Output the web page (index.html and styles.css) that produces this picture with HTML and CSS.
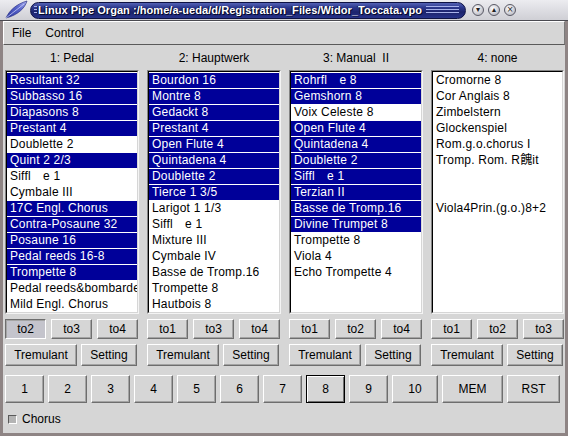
FILE: index.html
```html
<!DOCTYPE html>
<html>
<head>
<meta charset="utf-8">
<title>Linux Pipe Organ</title>
<link rel="stylesheet" href="styles.css">
</head>
<body>
<div class="window">
  <div class="titlebar">
    <svg class="appicon" viewBox="0 0 26 20" width="26" height="20">
      <defs>
        <linearGradient id="fq" x1="0" y1="1" x2="1" y2="0">
          <stop offset="0" stop-color="#2a36a0"/>
          <stop offset="0.6" stop-color="#5a66cc"/>
          <stop offset="1" stop-color="#aab0ee"/>
        </linearGradient>
      </defs>
      <path d="M3 18 C 6 11, 13 4, 24 1 C 22 8, 15 15, 3 18 Z" fill="url(#fq)" stroke="#1c2478" stroke-width="0.6"/>
      <path d="M3 18 L 21 4" stroke="#d8dcff" stroke-width="0.7"/>
    </svg>
    <div class="title">
      <span class="grip grip-l"></span>
      <span class="title-text">Linux Pipe Organ :/home/a-ueda/d/Registration_Files/Widor_Toccata.vpo</span>
      <span class="grip grip-r"></span>
    </div>
    <div class="wbtns">
      <span class="wbtn">&#9662;</span>
      <span class="wbtn">&#9652;</span>
      <span class="wbtn">&#215;</span>
    </div>
  </div>
  <div class="frame">
    <div class="menubar">
      <span class="menu">File</span>
      <span class="menu">Control</span>
    </div>
    <div class="content">
      <div class="divisions">
        <div class="division">
          <div class="div-head">1: Pedal</div>
          <div class="listbox"><ul class="items">
            <li class="on">Resultant 32</li>
            <li class="on">Subbasso 16</li>
            <li class="on">Diapasons 8</li>
            <li class="on">Prestant 4</li>
            <li>Doublette 2</li>
            <li class="on">Quint 2 2/3</li>
            <li>Siffl　e 1</li>
            <li>Cymbale III</li>
            <li class="on">17C Engl. Chorus</li>
            <li class="on">Contra-Posaune 32</li>
            <li class="on">Posaune 16</li>
            <li class="on">Pedal reeds 16-8</li>
            <li class="on">Trompette 8</li>
            <li>Pedal reeds&amp;bombarde</li>
            <li>Mild Engl. Chorus</li>
          </ul></div>
          <div class="couplers">
            <button class="btn pressed">to2</button>
            <button class="btn">to3</button>
            <button class="btn">to4</button>
          </div>
          <div class="extras">
            <button class="btn trem">Tremulant</button>
            <button class="btn sett">Setting</button>
          </div>
        </div>
        <div class="division">
          <div class="div-head">2: Hauptwerk</div>
          <div class="listbox"><ul class="items">
            <li class="on">Bourdon 16</li>
            <li class="on">Montre 8</li>
            <li class="on">Gedackt 8</li>
            <li class="on">Prestant 4</li>
            <li class="on">Open Flute 4</li>
            <li class="on">Quintadena 4</li>
            <li class="on">Doublette 2</li>
            <li class="on">Tierce 1 3/5</li>
            <li>Larigot 1 1/3</li>
            <li>Siffl　e 1</li>
            <li>Mixture III</li>
            <li>Cymbale IV</li>
            <li>Basse de Tromp.16</li>
            <li>Trompette 8</li>
            <li>Hautbois 8</li>
          </ul></div>
          <div class="couplers">
            <button class="btn">to1</button>
            <button class="btn">to3</button>
            <button class="btn">to4</button>
          </div>
          <div class="extras">
            <button class="btn trem">Tremulant</button>
            <button class="btn sett">Setting</button>
          </div>
        </div>
        <div class="division">
          <div class="div-head">3: Manual&nbsp; II</div>
          <div class="listbox"><ul class="items">
            <li class="on">Rohrfl　e 8</li>
            <li class="on">Gemshorn 8</li>
            <li>Voix Celeste 8</li>
            <li class="on">Open Flute 4</li>
            <li class="on">Quintadena 4</li>
            <li class="on">Doublette 2</li>
            <li class="on">Siffl　e 1</li>
            <li class="on">Terzian II</li>
            <li class="on">Basse de Tromp.16</li>
            <li class="on">Divine Trumpet 8</li>
            <li>Trompette 8</li>
            <li>Viola 4</li>
            <li>Echo Trompette 4</li>
          </ul></div>
          <div class="couplers">
            <button class="btn">to1</button>
            <button class="btn">to2</button>
            <button class="btn">to4</button>
          </div>
          <div class="extras">
            <button class="btn trem">Tremulant</button>
            <button class="btn sett">Setting</button>
          </div>
        </div>
        <div class="division">
          <div class="div-head">4: none</div>
          <div class="listbox"><ul class="items">
            <li>Cromorne 8</li>
            <li>Cor Anglais 8</li>
            <li>Zimbelstern</li>
            <li>Glockenspiel</li>
            <li>Rom.g.o.chorus I</li>
            <li>Tromp. Rom. R餽it</li>
            <li></li>
            <li></li>
            <li>Viola4Prin.(g.o.)8+2</li>
          </ul></div>
          <div class="couplers">
            <button class="btn">to1</button>
            <button class="btn">to2</button>
            <button class="btn">to3</button>
          </div>
          <div class="extras">
            <button class="btn trem">Tremulant</button>
            <button class="btn sett">Setting</button>
          </div>
        </div>
      </div>
      <div class="memory">
        <button class="btn num">1</button>
        <button class="btn num">2</button>
        <button class="btn num">3</button>
        <button class="btn num">4</button>
        <button class="btn num">5</button>
        <button class="btn num">6</button>
        <button class="btn num">7</button>
        <button class="btn num focus">8</button>
        <button class="btn num">9</button>
        <button class="btn num ten">10</button>
        <button class="btn num mem">MEM</button>
        <button class="btn num rst">RST</button>
      </div>
      <label class="chorus"><span class="check"></span>Chorus</label>
    </div>
  </div>
</div>
</body>
</html>
```

FILE: styles.css
```css
* { box-sizing: border-box; }
html, body { margin: 0; padding: 0; }
body {
  width: 568px;
  height: 436px;
  overflow: hidden;
  background: #d6d6d6;
  font-family: "Liberation Sans", Arial, "Noto Sans CJK JP", sans-serif;
  font-size: 12px;
  color: #000;
}
.window {
  width: 568px;
  height: 436px;
  display: flex;
  flex-direction: column;
}

/* title bar */
.titlebar {
  height: 21px;
  flex: none;
  display: flex;
  align-items: center;
  background: linear-gradient(#ececf0, #cfcfd5);
  border-bottom: 1px solid #4a4a50;
}
.appicon { flex: none; margin-left: 3px; display: block; }
.title {
  flex: none;
  margin-left: 1px;
  width: 436px;
  height: 17px;
  border-radius: 9px;
  border: 1px solid #0e1244;
  background: linear-gradient(#5462b4 0%, #2c388e 30%, #1c246c 60%, #26328a 100%);
  display: flex;
  align-items: center;
  padding-left: 3px;
}
.grip {
  height: 9px;
  background: repeating-linear-gradient(to bottom, #a8b2ea 0 1px, transparent 1px 3px);
}
.grip-l { width: 3px; flex: none; }
.grip-r { flex: 1; margin: 0 6px 0 4px; }
.title-text {
  margin-left: 1px;
  font-family: "Liberation Sans", Arial, sans-serif;
  font-weight: bold;
  font-size: 11px;
  letter-spacing: 0.05px;
  color: #fff;
  white-space: nowrap;
  text-shadow: 1px 1px 0 #05082a, -1px 0 0 #0a0e3a;
}
.wbtns {
  display: flex;
  gap: 4px;
  margin-left: 6px;
}
.wbtn {
  width: 12px;
  height: 12px;
  border-radius: 50%;
  border: 1px solid #5a5a66;
  background: radial-gradient(circle at 40% 35%, #ffffff, #c4c4cc 70%, #9a9aa4);
  font-size: 8px;
  line-height: 10px;
  text-align: center;
  color: #222;
  font-family: "DejaVu Sans", sans-serif;
}

/* frame */
.frame {
  flex: 1;
  display: flex;
  flex-direction: column;
  border-left: 3px solid #8e8484;
  border-right: 3px solid #8e8484;
  border-bottom: 3px solid #8e8484;
}
.menubar {
  height: 24px;
  flex: none;
  display: flex;
  align-items: center;
  padding-left: 1px;
  border-top: 1px solid #fff;
  border-left: 1px solid #fff;
  border-bottom: 1px solid #5a5a5a;
  border-right: 1px solid #7a7a7a;
}
.menu { padding: 0 7px; }

.content {
  flex: 1;
  display: flex;
  flex-direction: column;
  padding-left: 2px;
}
.divisions {
  display: grid;
  grid-template-columns: 134px 134px 134px 133px;
  column-gap: 8px;
}
.division { display: flex; flex-direction: column; }
.div-head {
  height: 25px;
  display: flex;
  align-items: center;
  justify-content: center;
  padding-top: 1px;
}
.listbox {
  height: 244px;
  border: 1px solid;
  border-color: #848484 #f4f4f4 #f4f4f4 #848484;
  background: #fff;
}
.items {
  list-style: none;
  margin: 0;
  padding: 0;
  height: 100%;
  overflow: hidden;
  background: #fff;
  border: 1px solid;
  border-color: #000 #d6d6d6 #d6d6d6 #000;
}
.items li {
  height: 16px;
  line-height: 16px;
  padding-left: 3px;
  white-space: nowrap;
  overflow: hidden;
  letter-spacing: 0.2px;
}
.items li.on {
  background: #000099;
  color: #fff;
  box-shadow: inset 0 1px 0 #fff;
}

/* buttons */
.btn {
  font-family: "Liberation Sans", Arial, sans-serif;
  font-size: 12px;
  color: #000;
  background: #d6d6d6;
  margin: 0;
  padding: 0;
  border: 1px solid;
  border-color: #ffffff #6e6e6e #6e6e6e #ffffff;
  box-shadow: inset -1px -1px 0 #a4a4a4;
  display: flex;
  align-items: center;
  justify-content: center;
}
.btn.pressed {
  background: #c4c4cc;
  border-color: #6e6e6e #ffffff #ffffff #6e6e6e;
  box-shadow: inset 1px 1px 0 #a4a4a4;
}
.couplers {
  margin-top: 5px;
  display: flex;
  gap: 5px;
}
.couplers .btn { width: 41px; height: 20px; }
.extras {
  margin-top: 5px;
  display: flex;
  gap: 4px;
}
.extras .btn { height: 22px; }
.trem { width: 72px; }
.sett { width: 56px; }

.memory {
  margin-top: 9px;
  display: flex;
  gap: 4px;
}
.num { width: 39px; height: 28px; }
.num.ten { width: 46px; }
.num.mem { width: 61px; }
.num.rst { width: 53px; }
.num.focus {
  border-color: #000;
  box-shadow: inset 1px 1px 0 #fff, inset -1px -1px 0 #6e6e6e;
}

.chorus {
  margin-top: 8px;
  height: 16px;
  display: flex;
  align-items: center;
  padding-left: 3px;
}
.check {
  width: 9px;
  height: 9px;
  margin-right: 5px;
  background: #b4b4b4;
  border: 1px solid;
  border-color: #5a5a5a #fff #fff #5a5a5a;
}
```
